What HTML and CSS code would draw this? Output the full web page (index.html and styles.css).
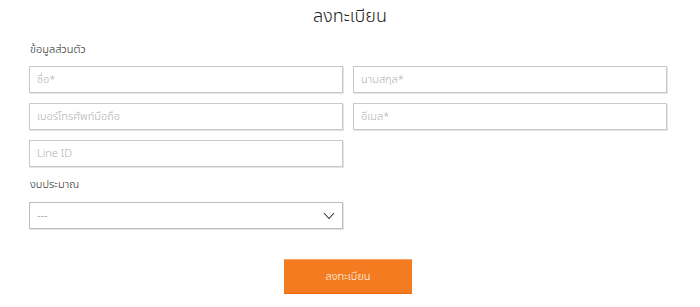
FILE: index.html
```html
<!DOCTYPE html>
<html lang="th">
<head>
    <meta charset="UTF-8">
    <meta name="viewport" content="width=device-width, initial-scale=1.0">
    <title>ลงทะเบียน</title>
    <link rel="stylesheet" href="styles.css">
</head>
<body>
    <main class="register">
        <h1 class="title">ลงทะเบียน</h1>

        <div class="section-label">ข้อมูลส่วนตัว</div>

        <div class="row">
            <input type="text" class="field" placeholder="ชื่อ*">
            <input type="text" class="field" placeholder="นามสกุล*">
        </div>
        <div class="row">
            <input type="text" class="field" placeholder="เบอร์โทรศัพท์มือถือ">
            <input type="text" class="field" placeholder="อีเมล*">
        </div>
        <div class="row">
            <input type="text" class="field" placeholder="Line ID">
        </div>

        <div class="section-label budget-label">งบประมาณ</div>

        <div class="row">
            <div class="select-box">
                <span class="select-value">---</span>
                <svg class="chevron" width="12" height="8" viewBox="0 0 12 8">
                    <polyline points="1,1 6,6.5 11,1" fill="none" stroke="#333" stroke-width="1.1"/>
                </svg>
            </div>
        </div>

        <div class="actions">
            <button class="submit-btn">ลงทะเบียน</button>
        </div>
    </main>
</body>
</html>
```

FILE: styles.css
```css
body {
    margin: 0;
    padding: 0;
    background-color: #fff;
    font-family: "Noto Sans Thai", "Noto Sans", "DejaVu Sans", sans-serif;
    font-weight: 300;
    color: #222;
}
.register {
    width: 638px;
    padding: 0 0 0 29px;
}
.title {
    margin: 0;
    padding-top: 4px;
    height: 33px;
    font-size: 18px;
    font-weight: 300;
    text-align: center;
    width: 642px;
    line-height: 26px;
}
.section-label {
    font-size: 11px;
    line-height: 16px;
    height: 16px;
    padding-left: 1px;
    margin-top: 5px;
    margin-bottom: 8px;
}
.budget-label {
    margin-top: 0;
    margin-bottom: 9px;
}
.row {
    display: flex;
    gap: 10px;
    margin-bottom: 10px;
}
.field {
    box-sizing: border-box;
    width: 314px;
    height: 27px;
    border: 1px solid #c9c9c9;
    border-radius: 0;
    box-shadow: 1px 1px 0 #e4e4e4;
    padding: 0 7px;
    font-family: inherit;
    font-weight: 300;
    font-size: 11px;
    outline: none;
}
.field::placeholder {
    color: #b0b0b0;
}
.select-box {
    box-sizing: border-box;
    width: 314px;
    height: 27px;
    border: 1px solid #bdbdbd;
    box-shadow: 1px 1px 0 #e4e4e4;
    display: flex;
    align-items: center;
    justify-content: space-between;
    padding: 0 7px 0 7px;
}
.select-value {
    font-size: 11px;
    color: #888;
}
.actions {
    display: flex;
    justify-content: center;
    width: 638px;
    margin-top: 30px;
}
.submit-btn {
    width: 128px;
    height: 35px;
    background-color: #f47b20;
    border: none;
    border-top: 1px solid #f7a06a;
    border-bottom: 1px solid #e8670e;
    color: #fff;
    font-family: inherit;
    font-weight: 300;
    font-size: 11px;
    cursor: pointer;
}
```
